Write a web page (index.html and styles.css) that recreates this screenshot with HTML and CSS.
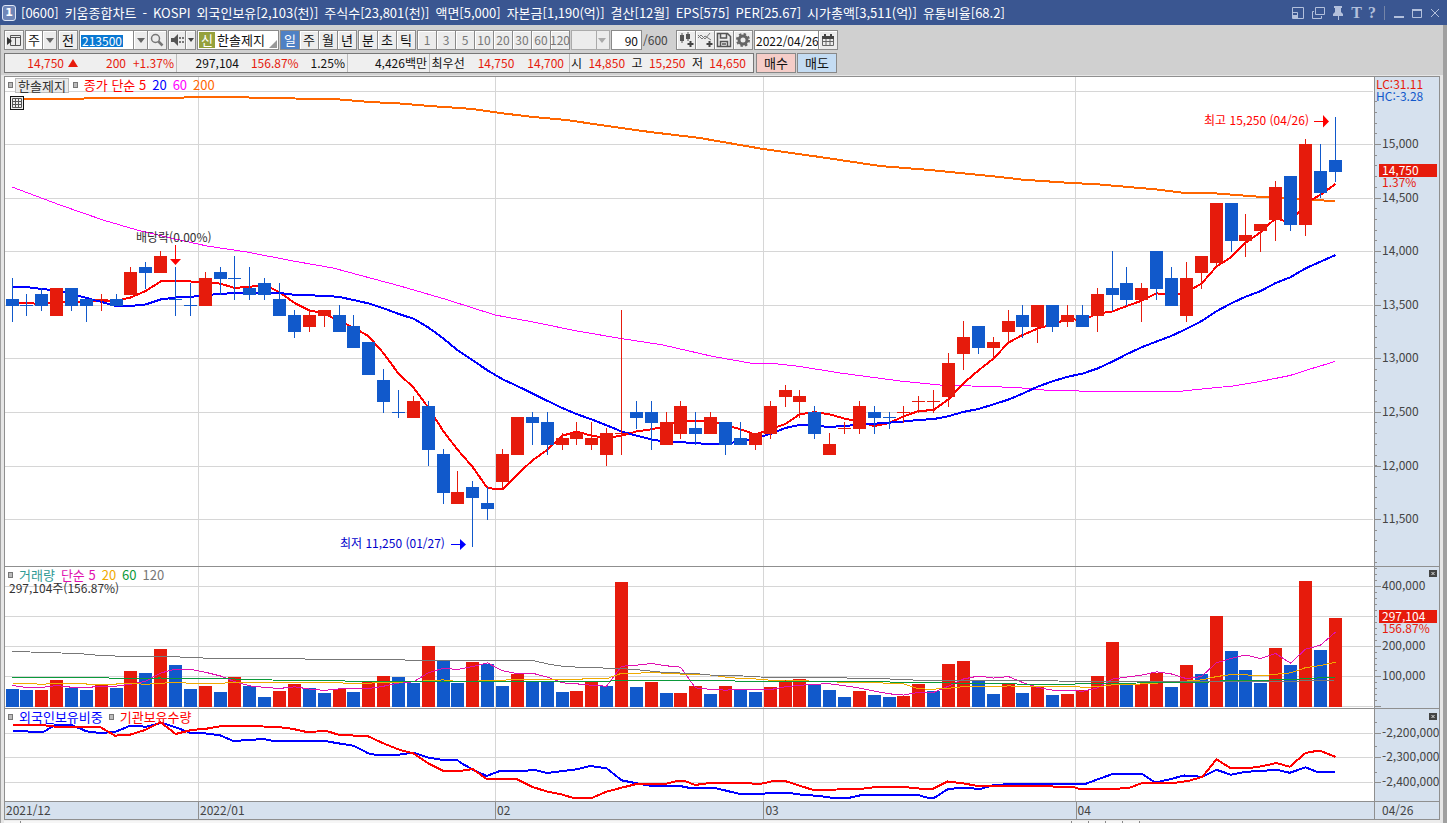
FILE: index.html
```
<!DOCTYPE html>
<html lang="ko">
<head>
<meta charset="utf-8">
<title>키움종합차트</title>
<link rel="stylesheet" href="styles.css">
</head>
<body>
<header class="titlebar">
  <span class="badge">1</span>
  <h1 class="title"><span>[0600]</span><span>키움종합차트</span><span>-</span><span>KOSPI</span><span>외국인보유[2,103(천)]</span><span>주식수[23,801(천)]</span><span>액면[5,000]</span><span>자본금[1,190(억)]</span><span>결산[12월]</span><span>EPS[575]</span><span>PER[25.67]</span><span>시가총액[3,511(억)]</span><span>유통비율[68.2]</span></h1>
  <div class="winbtns">
    <button aria-label="분할"><svg width="14" height="14"><path d="M1.5 1.5h11v11h-11zM1.5 6.5h5v6" fill="none" stroke="currentColor"/><path d="M2 9h4v3H2z" fill="currentColor"/></svg></button>
    <button aria-label="복제"><svg width="14" height="14"><path d="M4.5 1.5h9v7h-9zM3 5.5H1.5v7h9V10" fill="none" stroke="currentColor"/></svg></button>
    <button aria-label="고정"><svg width="14" height="14"><path d="M3 0h8v2h-1v4l2 2v2H8v4H7v-4H2V8l2-2V2H3z" fill="currentColor"/></svg></button>
    <button class="serif" aria-label="글꼴">T</button>
    <button class="serif" aria-label="도움말">?</button>
    <i class="bar"></i>
    <button aria-label="최소화"><svg width="12" height="14"><path d="M1 10h10v2H1z" fill="currentColor"/></svg></button>
    <button aria-label="최대화"><svg width="12" height="14"><path d="M1.5 3.5h9v8h-9z" fill="none" stroke="currentColor"/><path d="M1 3h10v2H1z" fill="currentColor"/></svg></button>
    <button aria-label="닫기"><svg width="12" height="14"><path d="M2 3l8 8M10 3l-8 8" fill="none" stroke="currentColor"/></svg></button>
  </div>
</header>
<main class="window">
  <div class="tools">
    <button class="tb" aria-label="메뉴"><svg width="16" height="14"><path d="M4.5 2.5h10v10h-10zM4 4.5h11M9.5 4v8" fill="none" stroke="#555"/><path d="M1 4l5 4-5 4z" fill="#333"/></svg></button>
    <span class="grp"><button class="tb w18 white">주</button><button class="tb w15" aria-label="종류"><i class="dn"></i></button></span>
    <button class="tb">전</button>
    <span class="grp"><input class="code" value="213500" aria-label="종목코드"><button class="tb w15" aria-label="목록"><i class="dn"></i></button><button class="tb" aria-label="검색"><svg width="14" height="14"><circle cx="5.5" cy="5.5" r="4" fill="none" stroke="#777" stroke-width="1.5"/><path d="M8.5 8.5l4 4" stroke="#777" stroke-width="2.5"/></svg></button></span>
    <span class="grp"><button class="tb w18" aria-label="소리"><svg width="14" height="12"><path d="M1 4h3l4-4v12l-4-4H1z" fill="#555"/><path d="M9 3h2v2H9zM12 3h2v2h-2zM9 7h2v2H9zM12 7h2v2h-2z" fill="#777"/></svg></button><button class="tb w11" aria-label="소리 설정"><i class="dn sm"></i></button></span>
    <span class="stock"><b>신</b><span>한솔제지</span><svg width="8" height="8"><path d="M8 0v8H0z" fill="#999"/></svg></span>
    <span class="grp"><button class="tb on">일</button><button class="tb">주</button><button class="tb">월</button><button class="tb">년</button></span>
    <span class="grp"><button class="tb">분</button><button class="tb">초</button><button class="tb">틱</button></span>
    <span class="grp off"><button class="tb">1</button><button class="tb">3</button><button class="tb">5</button><button class="tb">10</button><button class="tb">20</button><button class="tb">30</button><button class="tb">60</button><button class="tb">120</button></span>
    <span class="selwrap"><select aria-label="주기"><option></option></select><i class="dn pale"></i></span>
    <label class="count"><input value="90" aria-label="봉 개수">/600</label>
    <span class="grp">
      <button class="tb" aria-label="차트 추가"><svg width="16" height="16"><path d="M2 3h4v6H2zM8 2h4v5H8zM3.5 1h1v10h-1zM9.5 0h1v9h-1z" fill="#555"/><path d="M12.5 9v6M9.5 12h6" stroke="#444" stroke-width="2"/></svg></button>
      <button class="tb" aria-label="지표 추가"><svg width="16" height="16"><path d="M1 6l3-3 4 4 5-6M1 3l4 4 3-3 6 4" fill="none" stroke="#777"/><path d="M12.5 9v6M9.5 12h6" stroke="#444" stroke-width="2"/></svg></button>
      <button class="tb" aria-label="저장"><svg width="16" height="16"><path d="M1.5 1.5h10l3 3v10h-13zM4.5 2v4h6V2M4.5 14V9.5h7V14M6 12h4" fill="none" stroke="#555" stroke-width="1.5"/></svg></button>
      <button class="tb" aria-label="설정"><svg width="16" height="16"><circle cx="8" cy="8" r="4" fill="none" stroke="#666" stroke-width="3"/><circle cx="8" cy="8" r="6" fill="none" stroke="#666" stroke-width="2" stroke-dasharray="2.4 2.3"/></svg></button>
    </span>
    <span class="grp"><input class="date" value="2022/04/26" aria-label="날짜"><button class="tb" aria-label="달력"><svg width="14" height="13"><path d="M1.5 2.5h11v9h-11zM1 7.5h12M5 5v6M9 5v6" fill="none" stroke="#666"/><path d="M1 2h12v3H1zM3 0h2v2H3zM9 0h2v2H9z" fill="#444"/></svg></button></span>
  </div>
  <div class="quote">
    <div class="quotebox">
      <div class="q a"><span class="r">14,750</span><i class="up"></i><span class="r c3">200</span><span class="r c3">+1.37%</span></div>
      <div class="q b"><span>297,104</span><span class="r">156.87%</span><span>1.25%</span></div>
      <div class="q c"><span>4,426백만</span></div>
      <div class="q d"><span>최우선</span><span class="r">14,750</span><span class="r">14,700</span></div>
      <div class="q e"><span>시</span><span class="r">14,850</span><span>고</span><span class="r">15,250</span><span>저</span><span class="r">14,650</span></div>
    </div>
    <button class="trade buy">매수</button><button class="trade sell">매도</button>
  </div>
  <div class="frame">
  <section class="charts">
    <div class="panel">
      <div class="plot">
        <svg id="price" viewBox="5 77 1369 489" height="489" preserveAspectRatio="none"></svg>
        <div class="legend"><i class="sq"></i><button class="name">한솔제지</button><i class="sq"></i><span class="red">종가 단순 5</span><span class="blue">20</span><span class="mag">60</span><span class="org">200</span></div>
        <button class="gridbtn" aria-label="표"><svg width="10" height="10"><path d="M.5.5h9v9h-9zM0 3.5h10M0 6.5h10M3.5 0v10M6.5 0v10" fill="none" stroke="#555"/></svg></button>
        <span class="note high">최고 15,250 (04/26)</span>
        <span class="note exdiv">배당락(0.00%)</span>
        <span class="note low">최저 11,250 (01/27)</span>
      </div>
      <svg class="axis" id="priceAxis" viewBox="1375 77 64 489" width="64" height="489"></svg>
    </div>
    <div class="panel">
      <div class="plot">
        <svg id="volume" viewBox="5 567 1369 141" height="141" preserveAspectRatio="none"></svg>
        <div class="legend"><i class="sq"></i><span class="teal">거래량</span><span class="pink">단순 5</span><span class="gold">20</span><span class="green">60</span><span class="gray">120</span></div>
        <div class="volnote">297,104주(156.87%)</div>
      </div>
      <svg class="axis" id="volumeAxis" viewBox="1375 567 64 141" width="64" height="141"></svg>
    </div>
    <div class="panel">
      <div class="plot">
        <svg id="holding" viewBox="5 709 1369 92" height="92" preserveAspectRatio="none"></svg>
        <div class="legend hold"><i class="sq"></i><span class="blue">외국인보유비중</span><i class="sq"></i><span class="red">기관보유수량</span></div>
      </div>
      <svg class="axis" id="holdingAxis" viewBox="1375 709 64 92" width="64" height="92"></svg>
    </div>
    <div class="dates"><div class="months"><span class="m1">2021/12</span><span class="m2">2022/01</span><span class="m3">02</span><span class="m4">03</span><span class="m5">04</span></div><span class="today">04/26</span></div>
  </section>
  <footer class="foot"><i class="thumb"></i><i class="track"></i><i class="key"></i><i class="key"></i><i class="key"></i><i class="key"></i><i class="rest"></i></footer>
  </div>
</main>
<script src="chart.js"></script>
</body>
</html>
```
FILE: styles.css
```
* { box-sizing: border-box; }
body { margin: 0; min-height: 100vh; display: flex; flex-direction: column; background: #d0d0d0; font: 12px/16px "Noto Sans CJK KR", sans-serif; color: #111; }
button, input, select { font: inherit; color: inherit; margin: 0; padding: 0; border: 0; background: none; border-radius: 0; }
button { display: flex; align-items: center; justify-content: center; }
i { display: block; flex: none; }

.titlebar { display: flex; align-items: center; height: 25px; padding: 0 6px 0 2px; background: #3a5691; color: #fff; }
.badge { width: 14px; height: 16px; border: 1px solid #dfe6f5; border-radius: 3px; background: #6f86b8; font: bold 11px/14px "DejaVu Sans", sans-serif; text-align: center; }
.title { display: flex; gap: 6px; margin: 0 0 0 5px; font-size: 13px; font-weight: normal; white-space: nowrap; }
.winbtns { display: flex; align-items: center; gap: 6px; margin-left: auto; color: #b3c0dc; }
.serif { font: bold 16px/16px "Liberation Serif", serif; }
.bar { width: 1px; height: 14px; margin: 0 2px; background: #7585a8; }

.window { flex: 1; display: flex; flex-direction: column; border: solid #a0a0a0; border-width: 0 4px 0 1px; }
.tools, .quote { display: flex; gap: 1px; padding: 5px 3px 0; }
.quote { padding-top: 3px; padding-bottom: 2px; }
.grp { display: flex; }
.tb { width: 20px; height: 20px; border: 1px solid #8a8a8a; background: #ececec; box-shadow: inset 1px 1px #fff; font-size: 13px; }
.grp > * + * { margin-left: -1px; }
.w18 { width: 18px; }
.w15 { width: 15px; }
.w11 { width: 11px; }
.white { background: #fff; }
.on { background: #4f81c4; color: #fff; box-shadow: none; }
.off .tb { color: #777; font-size: 12px; }
.dn { border: solid transparent; border-width: 5px 4px 0; border-top-color: #666; }
.sm { border-width: 4px 3px 0; border-top-color: #444; }
.pale { border-top-color: #aaa; }
.code, .date { height: 20px; border: 1px solid #8a8a8a; }
.code { width: 55px; padding-left: 2px; color: #fff; background: linear-gradient(#0a78d2, #0a78d2) 1px 4px / 42px 12px no-repeat #fff; }
.date { width: 65px; padding-left: 1px; background: #fff; }
.stock { display: flex; width: 82px; height: 20px; border: 1px solid #8a8a8a; background: #fff; font-size: 13px; line-height: 18px; }
.stock b { width: 16px; margin: 1px 2px 1px 1px; background: #95a13c; color: #fff; font-weight: normal; text-align: center; line-height: 16px; }
.stock svg { margin: auto 1px 1px auto; flex: none; }
.selwrap { position: relative; width: 39px; height: 20px; border: 1px solid #aaa; background: #ececec; }
.selwrap select { appearance: none; display: block; width: 25px; height: 18px; border-right: 1px solid #aaa; }
.selwrap .dn { position: absolute; right: 3px; top: 7px; }
.count { display: flex; align-items: center; gap: 1px; width: 64px; color: #444; }
.count input { width: 31px; height: 20px; padding-right: 3px; border: 1px solid #8a8a8a; background: #fff; color: #111; text-align: right; }

.quotebox { display: flex; width: 750px; height: 20px; border: 1px solid #777; background: #efefef; line-height: 18px; }
.q { display: flex; justify-content: flex-end; padding-right: 2px; border-right: 1px solid #bbb; white-space: nowrap; }
.q .r { color: #e61b0c; }
.q .c3 { width: 48px; text-align: right; }
.q.a { width: 172px; }
.q.b { width: 171px; gap: 12px; }
.q.c { width: 82px; }
.q.d { width: 140px; gap: 13px; padding-right: 5px; }
.q.e { flex: 1; justify-content: space-between; padding: 0 7px 0 1px; border: 0; }
.up { align-self: flex-start; margin: 5px 0 0 4px; border: solid transparent; border-width: 0 5px 8px; border-bottom-color: #e61b0c; }
.trade { width: 40px; height: 20px; border: 1px solid #888; font-size: 13px; }
.buy { margin-left: 1px; background: #f5cdc8; }
.sell { background: #c4dcf3; }

.frame { flex: 1; display: flex; flex-direction: column; padding: 1px 3px 0; background: #e6e6e6; }
.charts { border: 1px solid #8f8f8f; background: #fff; }
.panel { display: flex; border-bottom: 1px solid #8f8f8f; }
.plot { position: relative; flex: 1; min-width: 0; border-right: 1px solid #8f8f8f; }
.plot > svg { display: block; width: 100%; }
.axis { display: block; flex: none; background: #d6e1ee; }
.axis text { fill: #444; }
.axis .lbl-white { fill: #fff; }
.axis .lbl-red { fill: #e61b0c; }
.axis .lbl-blue { fill: #1159cb; }
.legend { position: absolute; left: 3px; top: 0; display: flex; align-items: center; gap: 6px; font-size: 13px; white-space: nowrap; }
.sq { width: 5px; height: 6px; border: 1px solid #777; background: #bbb; }
.name { height: 15px; margin: 0 -2px 0 -4px; padding: 0 2px; border: 1px solid #bbb; background: #eaeaea; line-height: 13px; color: #333; }
.red { color: #f00; }
.blue { color: #00f; }
.mag { color: #f0f; }
.org { color: #f60; }
.teal { color: #2e9a94; }
.pink { color: #e010b0; }
.gold { color: #f0aa00; }
.green { color: #0a9a3a; }
.gray { color: #777; }
.gridbtn { position: absolute; left: 5px; top: 19px; width: 14px; height: 14px; border: 1px solid #111; background: #eee; }
.note { position: absolute; white-space: nowrap; }
.high { right: 65px; top: 35px; color: #f00; }
.low { left: 335px; top: 458px; color: #00c; }
.exdiv { left: 131px; top: 152px; color: #333; }
.volnote { position: absolute; left: 4px; top: 13px; color: #333; }
.dates { display: flex; height: 17px; background: #d6e1ee; color: #444; }
.months { position: relative; flex: 1; border-right: 1px solid #8f8f8f; }
.months span { position: absolute; top: 0; height: 17px; padding-left: 1px; border-left: 1px solid #8f8f8f; }
.months .m1 { left: 0; border: 0; }
.months .m2 { left: 14.1%; }
.months .m3 { left: 35.8%; }
.months .m4 { left: 55.4%; }
.months .m5 { left: 78.2%; }
.today { width: 64px; padding-left: 7px; }
.foot { flex: 1; display: flex; background: #ececec; }
.foot i { margin-top: 1px; border-right: 1px solid #888; background: #f6f6f6; }
.thumb { width: 17px; }
.track { flex: 1; }
.key { width: 17px; }
.foot .rest { width: 300px; border: 0; background: #ececec; }
```
FILE: chart.js
```
const NS = "http://www.w3.org/2000/svg";
const RED = "#e61b0c", BLUE = "#1159cb", GRID = "#d6d6d6", TICK = "#8f8f8f";

function add(svg, tag, attrs, text) {
  const el = document.createElementNS(NS, tag);
  for (const k in attrs) el.setAttribute(k, attrs[k]);
  if (text) el.textContent = text;
  svg.appendChild(el);
}
const rect = (svg, x, y, width, height, fill) => add(svg, "rect", { x, y, width, height, fill, "shape-rendering": "crispEdges" });
const line = (svg, pts, stroke, w) => add(svg, "polyline", { points: pts.map(p => p.join()).join(" "), fill: "none", stroke, "stroke-width": w, "shape-rendering": "crispEdges" });
const $ = id => document.getElementById(id);
const cx = i => Math.floor(12 + i * 14.866);

// body top, body bottom, high, low, direction
const candles = `13550 13500 13750 13350 b|13500 13500 13600 13400 b|13600 13500 13650 13450 b|13650 13400 13650 13400 r|13650 13500 13650 13450 b|13550 13500 13550 13350 b|13550 13550 13600 13450 r|13550 13500 13600 13500 b|13800 13600 13850 13600 r|13850 13800 13900 13650 b
13950 13800 14000 13800 r|13550 13550 13850 13400 b|13500 13500 13700 13400 b|13750 13500 13800 13500 r|13800 13750 13850 13600 b|13750 13750 13950 13550 b|13650 13600 13850 13550 b|13700 13600 13750 13550 b|13550 13400 13700 13400 b|13400 13250 13450 13200 b
13400 13300 13450 13250 r|13450 13400 13450 13300 r|13400 13250 13500 13250 b|13300 13100 13400 13100 b|13150 12850 13150 12850 b|12800 12600 12900 12500 b|12500 12500 12700 12450 b|12600 12450 12650 12450 r|12550 12150 12600 12000 b|12100 11750 12150 11650 b
11750 11650 11950 11650 r|11800 11700 11850 11250 b|11650 11600 11800 11500 b|12100 11850 12150 11800 r|12450 12100 12450 12100 r|12450 12400 12500 12200 b|12400 12200 12500 12100 b|12250 12200 12300 12150 r|12300 12250 12400 12200 r|12250 12200 12400 12150 r
12300 12100 12350 12000 r|12300 12300 13450 12100 r|12500 12450 12600 12350 b|12500 12400 12600 12150 b|12400 12200 12500 12200 r|12550 12300 12600 12250 r|12350 12300 12500 12200 b|12450 12300 12500 12300 r|12400 12200 12400 12100 b|12250 12200 12400 12200 b
12300 12200 12300 12150 r|12550 12300 12600 12250 r|12700 12650 12750 12550 r|12650 12600 12700 12450 r|12500 12300 12550 12250 b|12200 12100 12300 12100 r|12350 12350 12400 12300 r|12550 12350 12600 12300 r|12500 12450 12550 12300 b|12450 12450 12500 12350 b
12500 12500 12550 12400 r|12600 12600 12650 12500 r|12600 12600 12700 12500 r|12950 12650 13050 12550 r|13200 13050 13350 12900 r|13300 13100 13300 13050 b|13150 13100 13200 13000 r|13350 13250 13450 13150 r|13400 13300 13500 13200 b|13500 13300 13500 13150 r
13500 13300 13500 13250 b|13400 13350 13500 13300 r|13400 13300 13500 13300 b|13600 13400 13650 13250 r|13650 13600 14000 13450 b|13700 13550 13850 13500 b|13650 13550 13700 13350 r|14000 13650 14000 13550 b|13750 13500 13850 13500 b|13750 13400 13900 13350 r
13950 13800 13950 13650 r|14450 13900 14450 13850 r|14450 14100 14450 14000 b|14150 14100 14350 13950 r|14250 14200 14250 14000 r|14600 14300 14650 14100 r|14700 14250 14700 14200 b|15000 14250 15050 14150 r|14750 14550 15000 14500 b|14850 14750 15250 14650 b`
  .split(/[|\n]/).map(s => { const v = s.split(" "); return { top: +v[0], bottom: +v[1], high: +v[2], low: +v[3], up: v[4] === "r" }; });
const closes = candles.map(c => c.up ? c.top : c.bottom);
const volumes = [59,55,56,89,62,56,72,62,119,112,192,139,59,69,49,99,69,32,52,76,62,46,59,49,82,102,99,79,202,156,79,149,142,69,109,86,82,49,52,86,69,415,66,82,46,47,69,42,69,56,49,66,89,92,76,56,32,52,39,32,36,76,52,142,152,86,42,76,46,69,39,43,56,102,216,73,75,112,66,139,109,302,186,122,79,196,139,419,189,297];

const yPrice = p => 144.4 + (15000 - p) * 0.1071;
const yVol = v => 706.5 - v * 0.3;
// moving average; `head` holds the plotted y of the bars before the window is full
function average(values, n, y, head) {
  return values.map((_, i) => {
    if (i < n - 1) return [cx(i) + .5, head[i]];
    let s = 0;
    for (let k = 0; k < n; k++) s += values[i - k];
    return [cx(i) + .5, y(s / n)];
  });
}
function pairs(list, x0 = 0, y0 = 0, scale = 1) {
  const out = [];
  for (let i = 0; i < list.length; i += 2) out.push([x0 + list[i] / scale, y0 + list[i + 1] / scale]);
  return out;
}
function grid(svg, ys, top, height) {
  ys.forEach(y => rect(svg, 5, y, 1368, 1, GRID));
  [198, 495, 763, 1075].forEach(x => rect(svg, x, top, 1, height, GRID));
}

const price = $("price");
grid(price, [91, 144, 198, 251, 305, 358, 412, 466, 519], 77, 489);
line(price, pairs([12,100,23,99.5,42,98.7,130,98.3,205,97.2,235,97.2,295,98.5,340,99.5,370,102,400,103.5,430,106,473,109,500,113,533,117,567,120,600,125,650,132,700,138,763,149,820,157,880,166,930,170,1000,177,1023,179.7,1067,182.7,1100,184.5,1157,189.5,1183,192.7,1217,193.5,1247,195.8,1267,197.3,1313,200,1335,201]), "#f60", 2);
line(price, pairs([12,187,60,205,103,220,137,230,175,239,207,246,247,252,293,261,333,268,400,286,448,300,495,315,533,322,577,331,621,338.5,663,345,713,356.5,753,363.5,773,363.5,800,366.5,840,373,900,381,940,385,987,386.5,1017,387.5,1047,390.3,1093,391.3,1180,391.3,1207,388.5,1233,386,1260,381.5,1290,375.5,1307,370,1335,361.5]), "#f0f", 1);
line(price, average(closes, 5, yPrice, [303, 303, 304, 302.5]), "#f00", 2);
line(price, average(closes, 20, yPrice, [287,287,289,290.5,294,298,302,306,306,304.5,299.5,297.5,297,295,294,293,292.5,292.5,293]), "#00f", 2);
candles.forEach((c, i) => {
  const x = cx(i), color = c.up ? RED : BLUE, y = p => Math.floor(yPrice(p));
  rect(price, x, y(c.high), 1, y(c.low) - y(c.high) + 1, color);
  rect(price, x - 6, y(c.top), 13, Math.max(1, y(c.bottom) - y(c.top) + 1), color);
});
add(price, "path", { d: "M175 245h1v14h-1zM170 259h11l-5.5 6zM1314 121h9v-6l6 6.5-6 6v-5.5h-9z", fill: "#f00" });
add(price, "path", { d: "M451 544h9v-5l6 5.5-6 5.5v-5h-9z", fill: "#00f" });

const volume = $("volume");
grid(volume, [586, 616, 646, 676, 706], 567, 141);
volumes.forEach((v, i) => {
  const h = Math.round(v * .3);
  rect(volume, cx(i) - 6, 707 - h, 13, h, i && v > volumes[i - 1] ? RED : BLUE);
});
line(volume, average(volumes, 5, yVol, [685.5, 687.5, 687.5, 685.5]), "#e010b0", 1);
line(volume, average(volumes, 20, yVol, [370,370,373,370,370,372,372,372,370,373,370,367,370,370,370,367,367,367,367].map(v => 560 + v / 3)), "#f0aa00", 1);
line(volume, pairs([12,677.5,108,677.5,110,678.5,160,678,185,678.5,235,679,272,680,345,681,360,681.5,450,681.5,600,682,617,680.5,730,680.5,740,681.5,860,681.5,950,683,1050,684.5,1100,683.5,1210,682,1225,680.5,1270,680,1300,679,1335,677]), "#0a9a3a", 1);
line(volume, pairs([12,651.5,48,652.5,80,653.7,95,655,125,656.5,180,657,215,658.5,300,658.5,310,659.5,400,659.5,410,660.5,533,660.5,550,664.5,565,666.5,585,667.5,620,668.5,637,669.7,665,672.5,695,673.5,710,675,735,675.5,760,677,820,677.5,880,678.6,925,680.5,1015,680.5,1100,681.5,1170,682,1225,681.5,1300,681,1335,680]), "#777", 1);

const holding = $("holding");
grid(holding, [733, 757, 782], 709, 92);
line(holding, [
  ...pairs([38,513,80,513,90,516,130,516,165,495,215,495,260,514,300,519,345,516,388,498,440,500,485,488,530,503,570,518,615,520,660,526,700,543,745,540,790,537,820,543,975,543,1015,550,1060,557,1105,580,1130,585,1190,585,1240,578,1285,593,1330,600,1372,600], 0, 560, 3),
  ...pairs([0,607,40,630,80,648,120,633,195,633,220,629,262,639,310,633,350,628,390,618,440,625,485,661,530,670,575,678,660,678,690,684,765,684,840,702,900,702,940,698,980,698,1025,704,1080,708,1120,714,1165,714,1205,705,1375,705], 460, 560, 3),
  ...pairs([15,706,40,709,84,681,130,678,180,681,220,669,290,666,350,666,490,667,530,652,575,636,660,636,700,662,745,652,785,641,840,645,882,624,925,639,970,630,1010,628,1060,624,1100,633,1147,617,1185,632,1236,632], 920, 560, 2.975)
], "#00f", 2);
line(holding, [
  ...pairs([38,495,125,495,165,500,300,501,345,527,390,524,435,510,482,487,527,522,575,510,620,506,665,498,745,498,835,501,880,507,920,516,980,513,1015,524,1105,529,1150,550,1200,570,1240,580,1285,610,1330,633,1378,633], 0, 560, 3),
  ...pairs([0,633,38,627,80,657,170,657,215,680,262,695,300,702,340,714,395,714,440,695,485,683,530,672,620,671,655,662,675,663,705,675,755,668,835,668,900,672,940,663,975,663,1060,690,1200,687,1250,681,1330,681], 460, 560, 3),
  ...pairs([0,680,40,680,82,659,125,664,165,671,350,673,455,675,475,681,575,681,622,678,660,664,765,662,800,657,840,645,882,593,922,618,985,618,1020,613,1060,604,1100,615,1147,574,1175,569,1195,569,1236,586], 920, 560, 2.975)
], "#f00", 2);

function axis(svg, majors, minors) {
  minors.forEach(y => rect(svg, 1375, Math.floor(y), 2, 1, TICK));
  majors.forEach(([y, label]) => {
    rect(svg, 1375, y, 6, 1, TICK);
    add(svg, "text", { x: 1382, y: y + 4 }, label);
  });
}
function closeBox(svg, y) {
  rect(svg, 1429, y, 8, 7, "#444");
  add(svg, "path", { d: `M1431.5 ${y + 2}l3 3m0-3l-3 3`, stroke: "#ddd", fill: "none" });
}
function tag(svg, y, main, sub) {
  rect(svg, 1379, y, 58, 13, RED);
  add(svg, "text", { x: 1382, y: y + 11, class: "lbl-white" }, main);
  add(svg, "text", { x: 1382, y: y + 23, class: "lbl-red" }, sub);
}
const range = (from, to, step) => { const a = []; for (let v = from; v < to; v += step) a.push(v); return a; };

const pa = $("priceAxis");
axis(pa, [[144, "15,000"], [198, "14,500"], [251, "14,000"], [305, "13,500"], [358, "13,000"], [412, "12,500"], [466, "12,000"], [519, "11,500"]], range(80.2, 566, 10.71).slice(2));
add(pa, "text", { x: 1376, y: 89, class: "lbl-red" }, "LC:31.11");
add(pa, "text", { x: 1376, y: 101, class: "lbl-blue" }, "HC:-3.28");
tag(pa, 164, "14,750", "1.37%");
const va = $("volumeAxis");
axis(va, [[586, "400,000"], [646, "200,000"], [676, "100,000"]], range(568.5, 707, 6));
rect(va, 1375, 706, 6, 1, TICK);
tag(va, 610, "297,104", "156.87%");
closeBox(va, 570);
const ha = $("holdingAxis");
axis(ha, [[733, "-2,200,000"], [757, "-2,300,000"], [782, "-2,400,000"]], [722, 746, 772]);
closeBox(ha, 713);
```
